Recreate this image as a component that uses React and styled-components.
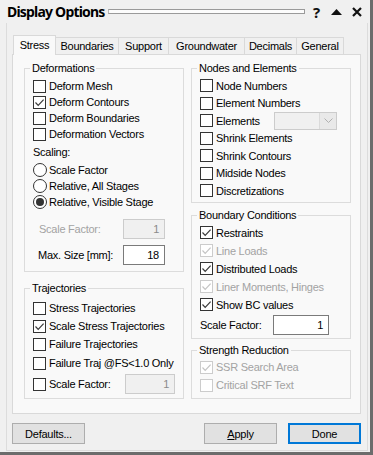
import React from 'react';
import styled, { createGlobalStyle, css } from 'styled-components';

const Global = createGlobalStyle`
  html, body { margin: 0; padding: 0; background: #f0f0f0; }
  body {
    font-family: "Liberation Sans", Arial, sans-serif;
    font-size: 11px;
    letter-spacing: -0.25px;
    color: #000;
  }
  * { box-sizing: border-box; }
`;

const Window = styled.div`
  width: 373px;
  height: 455px;
  background: #f0f0f0;
  border-right: 3px solid #6c6c6c;
  border-bottom: 3px solid #6c6c6c;
  display: flex;
  flex-direction: column;
`;

const TitleBar = styled.div`
  height: 23px;
  flex: 0 0 23px;
  display: flex;
  align-items: center;
  padding: 0 3.5px 0 7px;
`;

const Title = styled.div`
  font-family: "Noto Sans", "Liberation Sans", sans-serif;
  font-weight: 700;
  font-size: 14px;
  letter-spacing: -0.8px;
  color: #000;
`;

const Grip = styled.div`
  flex: 1;
  height: 5px;
  margin: 0 1.5px 0 3px;
  border: 1px solid #9a9a9a;
  border-left-color: #b8b8b8;
  background: #fcfcfc;
`;

const TitleButton = styled.div`
  width: 20px;
  height: 20px;
  display: flex;
  align-items: center;
  justify-content: center;
  font-family: "Noto Sans", "Liberation Sans", sans-serif;
  font-weight: 700;
  font-size: 15px;
  color: #111;
`;

const Frame = styled.div`
  flex: 1;
  margin: 0 2px 1px 6px;
  border: 1px solid #dcdcdc;
  border-top: none;
  padding: 12px 6px 6px 5px;
  display: flex;
  flex-direction: column;
`;

const TabStrip = styled.div`
  display: flex;
  align-items: flex-end;
  height: 20px;
  padding-left: 2px;
  margin-bottom: -1px;
  position: relative;
  z-index: 1;
`;

const Tab = styled.div`
  height: ${p => (p.$active ? 20 : 18)}px;
  width: ${p => p.$w}px;
  margin-left: -1px;
  display: flex;
  align-items: center;
  justify-content: center;
  border: 1px solid #d9d9d9;
  background: #f0f0f0;
  white-space: nowrap;
  ${p => p.$active && css`
    background: #f9f9f9;
    border-bottom: none;
    padding-bottom: 1px;
    position: relative;
    z-index: 2;
  `}
`;

const Panel = styled.div`
  height: 360px;
  border: 1px solid #d9d9d9;
  background: #f9f9f9;
  padding: 5px 0 0 11px;
  display: grid;
  grid-template-columns: 160px 160px;
  column-gap: 7px;
  align-content: start;
`;

const Column = styled.div`
  display: flex;
  flex-direction: column;
`;

const Group = styled.fieldset`
  margin: ${p => p.$mt || 0}px 0 0 0;
  padding: ${p => p.$pt || 0}px ${p => p.$pr || 6}px ${p => p.$pb || 4}px 8px;
  border: 1px solid #dcdcdc;
  min-width: 0;
  display: flex;
  flex-direction: column;
`;

const Legend = styled.legend`
  padding: 0 2px;
  margin-left: -3px;
  line-height: 16px;
  height: 16px;
  font-size: 11px;
  color: #000;
`;

const Row = styled.div`
  display: flex;
  align-items: center;
  height: ${p => p.$h}px;
  margin-top: ${p => p.$mt || 0}px;
  gap: 3px;
  color: ${p => (p.$disabled ? '#a3a3a3' : '#000')};
  white-space: nowrap;
`;

const BoxShell = styled.span`
  width: 13px;
  height: 13px;
  flex: 0 0 13px;
  border: 1px solid ${p => (p.$disabled ? '#cccccc' : '#333333')};
  background: #ffffff;
  display: flex;
  align-items: center;
  justify-content: center;
`;

const RadioShell = styled.span`
  width: 14px;
  height: 14px;
  flex: 0 0 14px;
  border-radius: 50%;
  border: 1px solid #333;
  background: #fff;
  display: flex;
  align-items: center;
  justify-content: center;
  margin-right: -1px;
`;

const RadioDot = styled.span`
  width: 8px;
  height: 8px;
  border-radius: 50%;
  background: #333;
`;

const Label = styled.span`
  width: ${p => (p.$w ? `${p.$w}px` : 'auto')};
  flex: 0 0 auto;
  padding-left: ${p => p.$pl || 0}px;
  color: ${p => (p.$disabled ? '#a3a3a3' : 'inherit')};
`;

const Input = styled.div`
  width: ${p => p.$w}px;
  height: 20px;
  border: 1px solid ${p => (p.$disabled ? '#cccccc' : '#7a7a7a')};
  background: ${p => (p.$disabled ? '#f0f0f0' : '#ffffff')};
  color: ${p => (p.$disabled ? '#8a8a8a' : '#000')};
  display: flex;
  align-items: center;
  justify-content: flex-end;
  padding-right: 5px;
`;

const Combo = styled.div`
  width: 63px;
  height: 18px;
  margin-left: auto;
  border: 1px solid #cccccc;
  background: #f0f0f0;
  display: flex;
  justify-content: flex-end;
`;

const ComboArrow = styled.div`
  width: 17px;
  height: 16px;
  border-left: 1px solid #dadada;
  background: #e9e9e9;
  display: flex;
  align-items: center;
  justify-content: center;
`;

const Footer = styled.div`
  display: flex;
  margin-top: 9px;
  height: 21px;
`;

const Button = styled.button`
  width: 73px;
  height: 21px;
  padding: 0;
  margin-left: ${p => p.$ml || 0}px;
  font-family: inherit;
  font-size: 11px;
  letter-spacing: inherit;
  color: #000;
  background: #e1e1e1;
  border: 1px solid #adadad;
  ${p => p.$primary && css`
    border: 2px solid #0078d7;
  `}
`;

const Spacer = styled.div`
  flex: 1;
`;

const Check = ({ checked, disabled }) => (
  <BoxShell $disabled={disabled}>
    {checked && (
      <svg width="11" height="11" viewBox="0 0 11 11">
        <path d="M1.5 5.5 L4.2 8.3 L9.6 2.6" fill="none"
          stroke={disabled ? '#c4c4c4' : '#3a3a3a'} strokeWidth="1.2" />
      </svg>
    )}
  </BoxShell>
);

const CheckRow = ({ h, mt, checked, disabled, children }) => (
  <Row $h={h} $mt={mt} $disabled={disabled}>
    <Check checked={checked} disabled={disabled} />
    <span>{children}</span>
  </Row>
);

const RadioRow = ({ h, mt, checked, children }) => (
  <Row $h={h} $mt={mt}>
    <RadioShell>{checked && <RadioDot />}</RadioShell>
    <span>{children}</span>
  </Row>
);

const tabs = [
  ['Stress', 43],
  ['Boundaries', 64],
  ['Support', 51],
  ['Groundwater', 77],
  ['Decimals', 53],
  ['General', 48],
];

export default function App() {
  return (
    <>
      <Global />
      <Window>
        <TitleBar>
          <Title>Display Options</Title>
          <Grip />
          <TitleButton>?</TitleButton>
          <TitleButton>
            <svg width="11" height="6" viewBox="0 0 11 6">
              <path d="M0 6 L5.5 0 L11 6 Z" fill="#111" />
            </svg>
          </TitleButton>
          <TitleButton>
            <svg width="10" height="10" viewBox="0 0 10 10">
              <path d="M1 1 L9 9 M9 1 L1 9" stroke="#111" strokeWidth="2.2" />
            </svg>
          </TitleButton>
        </TitleBar>
        <Frame>
          <TabStrip>
            {tabs.map(([t, w], i) => (
              <Tab key={t} $w={w} $active={i === 0}>{t}</Tab>
            ))}
          </TabStrip>
          <Panel>
            <Column>
              <Group $pt={2} $pb={6}>
                <Legend>Deformations</Legend>
                <CheckRow h={16}>Deform Mesh</CheckRow>
                <CheckRow h={16} checked>Deform Contours</CheckRow>
                <CheckRow h={16}>Deform Boundaries</CheckRow>
                <CheckRow h={16}>Deformation Vectors</CheckRow>
                <Row $h={16} $mt={2}>Scaling:</Row>
                <RadioRow h={16} mt={2}>Scale Factor</RadioRow>
                <RadioRow h={16}>Relative, All Stages</RadioRow>
                <RadioRow h={16} checked>Relative, Visible Stage</RadioRow>
                <Row $h={20} $mt={9}>
                  <Label $w={87} $pl={6} $disabled>Scale Factor:</Label>
                  <Input $w={42} $disabled>1</Input>
                </Row>
                <Row $h={20} $mt={6}>
                  <Label $w={87} $pl={5}>Max. Size [mm]:</Label>
                  <Input $w={42}>18</Input>
                </Row>
              </Group>
              <Group $mt={8} $pt={3} $pb={4}>
                <Legend>Trajectories</Legend>
                <CheckRow h={18}>Stress Trajectories</CheckRow>
                <CheckRow h={18} checked>Scale Stress Trajectories</CheckRow>
                <CheckRow h={18}>Failure Trajectories</CheckRow>
                <CheckRow h={18} mt={1}>Failure Traj @FS&lt;1.0 Only</CheckRow>
                <Row $h={20} $mt={2}>
                  <Check />
                  <Label $w={73}>Scale Factor:</Label>
                  <Input $w={50} $disabled>1</Input>
                </Row>
              </Group>
            </Column>
            <Column>
              <Group $pt={1} $pb={2} $pr={13}>
                <Legend>Nodes and Elements</Legend>
                <CheckRow h={17.5}>Node Numbers</CheckRow>
                <CheckRow h={17.5}>Element Numbers</CheckRow>
                <Row $h={17.5}>
                  <Check />
                  <span>Elements</span>
                  <Combo>
                    <ComboArrow>
                      <svg width="9" height="5" viewBox="0 0 9 5">
                        <path d="M0.5 0.5 L4.5 4.5 L8.5 0.5" fill="none" stroke="#b0b0b0" strokeWidth="1" />
                      </svg>
                    </ComboArrow>
                  </Combo>
                </Row>
                <CheckRow h={17.5}>Shrink Elements</CheckRow>
                <CheckRow h={17.5}>Shrink Contours</CheckRow>
                <CheckRow h={17.5}>Midside Nodes</CheckRow>
                <CheckRow h={17.5}>Discretizations</CheckRow>
              </Group>
              <Group $mt={4.5} $pt={0.5} $pb={3}>
                <Legend>Boundary Conditions</Legend>
                <CheckRow h={18} checked>Restraints</CheckRow>
                <CheckRow h={18} checked disabled>Line Loads</CheckRow>
                <CheckRow h={18} checked>Distributed Loads</CheckRow>
                <CheckRow h={18} checked disabled>Liner Moments, Hinges</CheckRow>
                <CheckRow h={18} checked>Show BC values</CheckRow>
                <Row $h={20} $mt={1}>
                  <Label $w={70}>Scale Factor:</Label>
                  <Input $w={56}>1</Input>
                </Row>
              </Group>
              <Group $mt={3.5} $pt={0} $pb={4}>
                <Legend>Strength Reduction</Legend>
                <CheckRow h={18} checked disabled>SSR Search Area</CheckRow>
                <CheckRow h={18} disabled>Critical SRF Text</CheckRow>
              </Group>
            </Column>
          </Panel>
          <Footer>
            <Button>Defaults...</Button>
            <Spacer />
            <Button><u>A</u>pply</Button>
            <Button $ml={11} $primary>Done</Button>
          </Footer>
        </Frame>
      </Window>
    </>
  );
}
